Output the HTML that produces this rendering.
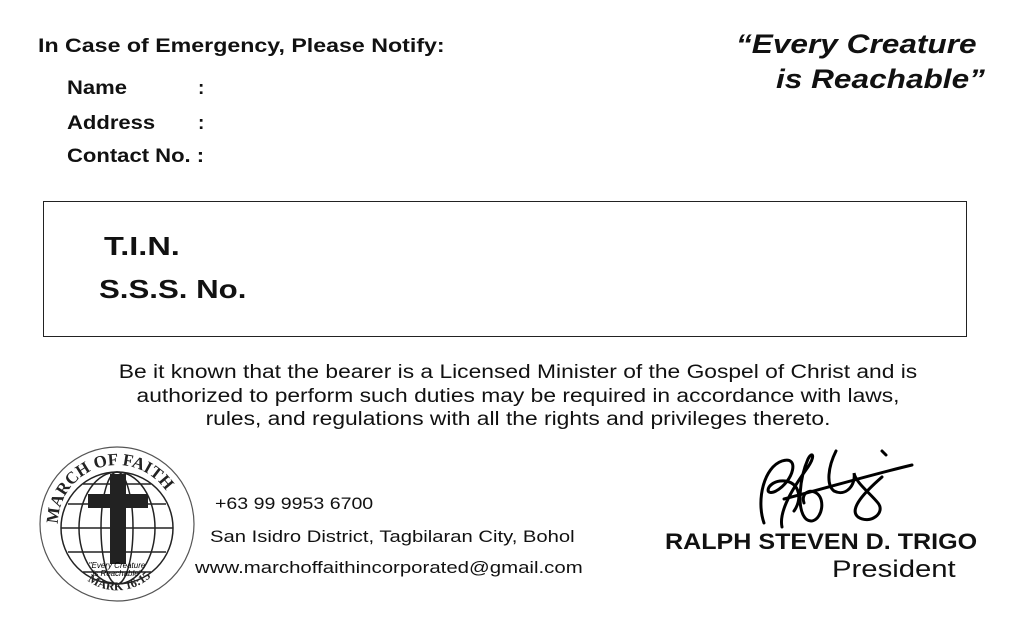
<!DOCTYPE html>
<html><head><style>
body{margin:0;width:1013px;height:638px;background:#fff;position:relative;overflow:hidden;font-family:"Liberation Sans",Arial,sans-serif;color:#111}
.a{position:absolute;white-space:nowrap;transform-origin:0 0}
.b{font-weight:bold}
</style></head><body>
<div class="a b" style="left:38px;top:36px;font-size:19px;transform:scaleX(1.22)">In Case of Emergency, Please Notify:</div>
<div class="a b" style="left:67px;top:78px;font-size:19px;transform:scaleX(1.16)">Name</div>
<div class="a b" style="left:198px;top:78px;font-size:19px">:</div>
<div class="a b" style="left:67px;top:113px;font-size:19px;transform:scaleX(1.16)">Address</div>
<div class="a b" style="left:198px;top:113px;font-size:19px">:</div>
<div class="a b" style="left:67px;top:146px;font-size:19px;transform:scaleX(1.16)">Contact No. :</div>
<div class="a b" style="left:736px;top:29px;font-size:27px;font-style:italic;transform:scaleX(1.17)">“Every Creature</div>
<div class="a b" style="left:776px;top:64px;font-size:27px;font-style:italic;transform:scaleX(1.17)">is Reachable”</div>
<div class="a" style="left:43px;top:201px;width:922px;height:134px;border:1px solid #222"></div>
<div class="a b" style="left:104px;top:231px;font-size:26px;transform:scaleX(1.25)">T.I.N.</div>
<div class="a b" style="left:99px;top:274px;font-size:26px;transform:scaleX(1.2)">S.S.S. No.</div>
<div class="a" style="left:0;width:1036px;top:361px;font-size:19px;text-align:center;line-height:23.5px;transform-origin:518px 0;transform:scaleX(1.2)">Be it known that the bearer is a Licensed Minister of the Gospel of Christ and is<br>authorized to perform such duties may be required in accordance with laws,<br>rules, and regulations with all the rights and privileges thereto.</div>
<svg class="a" style="left:38px;top:446px" width="160" height="158" viewBox="0 0 160 158">
<circle cx="79" cy="78" r="77" fill="none" stroke="#555" stroke-width="1.2"/>
<g fill="none" stroke="#222" stroke-width="1.5">
<circle cx="79" cy="82" r="56"/>
<ellipse cx="79" cy="82" rx="38" ry="56"/>
<ellipse cx="79" cy="82" rx="16" ry="56"/>
<path d="M23 82H135M30 58H128M30 106H128M45 38H113M45 126H113"/>
</g>
<rect x="72" y="28" width="16" height="90" fill="#222"/>
<rect x="50" y="48" width="60" height="14" fill="#222"/>
<path id="ar" d="M20 78 A59 59 0 0 1 138 78" fill="none"/>
<text font-family="Liberation Serif" font-weight="bold" font-size="17" fill="#222"><textPath href="#ar">MARCH OF FAITH</textPath></text>
<path id="ar2" d="M35 118 A50 50 0 0 0 123 118" fill="none"/>
<text font-family="Liberation Serif" font-weight="bold" font-size="12" fill="#222"><textPath href="#ar2" startOffset="22">MARK 16:15</textPath></text>
<text x="79" y="122" font-size="8" text-anchor="middle" font-style="italic">"Every Creature</text>
<text x="79" y="130" font-size="8" text-anchor="middle" font-style="italic">is Reachable"</text>
</svg>
<div class="a" style="left:215px;top:494px;font-size:17px;transform:scaleX(1.15)">+63 99 9953 6700</div>
<div class="a" style="left:210px;top:527px;font-size:17px;transform:scaleX(1.19)">San Isidro District, Tagbilaran City, Bohol</div>
<div class="a" style="left:195px;top:558px;font-size:17px;transform:scaleX(1.2)">www.marchoffaithincorporated@gmail.com</div>
<svg class="a" style="left:750px;top:445px" width="170" height="90" viewBox="0 0 170 90" fill="none" stroke="#000" stroke-width="3" stroke-linecap="round">
<path d="M14 78 C6 55 14 22 32 16 C50 10 44 36 26 46 C14 52 16 38 30 36 C48 34 54 52 44 66"/>
<path d="M32 82 C28 64 48 36 58 22 C66 10 62 6 58 14 C50 32 46 64 56 74 C66 82 76 64 70 52 C64 42 50 46 54 58"/>
<path d="M34 54 C80 42 120 30 162 20"/>
<path d="M86 6 C78 22 76 40 84 46 C96 52 106 40 104 28 C106 38 120 48 128 58 C136 68 120 80 108 72 C98 64 116 46 132 32"/>
<path d="M132 6 L136 10"/>
</svg>
<div class="a b" style="left:665px;top:529px;font-size:22px;transform:scaleX(1.14)">RALPH STEVEN D. TRIGO</div>
<div class="a" style="left:832px;top:556px;font-size:24px;transform:scaleX(1.22)">President</div>
</body></html>
